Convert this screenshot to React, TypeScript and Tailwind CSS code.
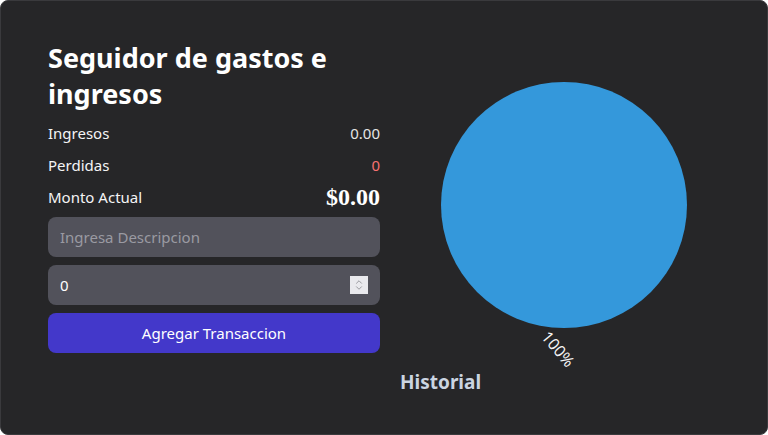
import { ChevronUp, ChevronDown } from "lucide-react";

export default function App() {
  return (
    <div
      className="h-[435px] w-[768px] overflow-hidden rounded-lg border border-[#3a3a3d] bg-[#262628] text-white"
      style={{ fontFamily: '"Noto Sans", "Open Sans", sans-serif' }}
    >
      <div className="flex gap-5 pl-[47px] pr-12 pt-[39px]">
        {/* Left column */}
        <div className="flex w-[333px] flex-col">
          <h1 className="mb-[5px] text-[27px] font-bold leading-9 text-white">
            Seguidor de gastos e ingresos
          </h1>
          <div className="flex h-8 items-center justify-between text-[15px] text-[#f4f4f5]">
            <span>Ingresos</span>
            <span className="text-[#e5e5e5]">0.00</span>
          </div>
          <div className="flex h-8 items-center justify-between text-[15px] text-[#f4f4f5]">
            <span>Perdidas</span>
            <span className="text-[#f87171]">0</span>
          </div>
          <div className="flex h-8 items-center justify-between text-[15px] text-[#f4f4f5]">
            <span>Monto Actual</span>
            <span
              className="text-[24px] font-bold text-white"
              style={{ fontFamily: '"Liberation Serif", serif' }}
            >
              $0.00
            </span>
          </div>
          <div className="mt-1 flex flex-col gap-2">
            <input
              type="text"
              placeholder="Ingresa Descripcion"
              className="h-10 w-full rounded-lg bg-[#52525b] px-3 text-[15px] text-white outline-none placeholder:text-[#9a9aa2]"
            />
            <div className="flex h-10 items-center rounded-lg bg-[#52525b] pl-3 pr-3">
              <input
                type="text"
                defaultValue="0"
                className="min-w-0 flex-1 bg-transparent text-[15px] text-white outline-none"
              />
              <div className="flex h-[18px] w-[18px] flex-col items-center justify-center bg-[#e9e9ed] text-[#8a8a90]">
                <ChevronUp className="-mb-[2px] h-[10px] w-[10px]" strokeWidth={2} />
                <ChevronDown className="-mt-[2px] h-[10px] w-[10px]" strokeWidth={2} />
              </div>
            </div>
            <button className="h-10 w-full rounded-lg bg-[#4338ca] text-[15px] text-white">
              Agregar Transaccion
            </button>
          </div>
        </div>

        {/* Right column */}
        <div className="flex flex-1 flex-col">
          <svg width="319" height="340" viewBox="0 0 319 340">
            <circle cx="164" cy="165" r="123" fill="#3498db" />
            <text
              x="0"
              y="0"
              fill="#f4f4f5"
              fontSize="16"
              textAnchor="middle"
              dominantBaseline="middle"
              transform="translate(157 310) rotate(50)"
              style={{ fontFamily: '"Noto Sans", sans-serif' }}
            >
              100%
            </text>
          </svg>
          <h2 className="-mt-3 text-[19px] font-bold leading-7 text-[#cbd5e1]">Historial</h2>
        </div>
      </div>
    </div>
  );
}
